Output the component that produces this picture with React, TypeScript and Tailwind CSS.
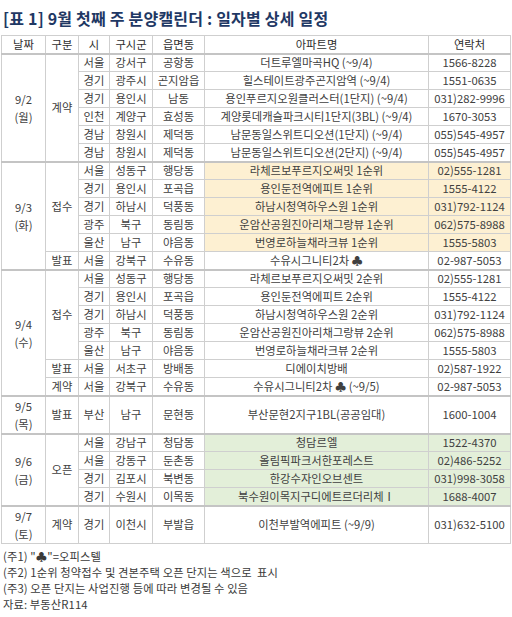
type Row = {
  si: string;
  gu: string;
  dong: string;
  apt: string;
  tel: string;
  hl?: 'y' | 'g';
};

type Kind = { kind: string; rows: Row[] };
type Day = { date: string; dow: string; tall?: string; kinds: Kind[] };

const days: Day[] = [
  {
    date: '9/2',
    dow: '(월)',
    kinds: [
      {
        kind: '계약',
        rows: [
          { si: '서울', gu: '강서구', dong: '공항동', apt: '더트루엘마곡HQ (~9/4)', tel: '1566-8228' },
          { si: '경기', gu: '광주시', dong: '곤지암읍', apt: '힐스테이트광주곤지암역 (~9/4)', tel: '1551-0635' },
          { si: '경기', gu: '용인시', dong: '남동', apt: '용인푸르지오원클러스터(1단지) (~9/4)', tel: '031)282-9996' },
          { si: '인천', gu: '계양구', dong: '효성동', apt: '계양롯데캐슬파크시티1단지(3BL) (~9/4)', tel: '1670-3053' },
          { si: '경남', gu: '창원시', dong: '제덕동', apt: '남문동일스위트디오션(1단지) (~9/4)', tel: '055)545-4957' },
          { si: '경남', gu: '창원시', dong: '제덕동', apt: '남문동일스위트디오션(2단지) (~9/4)', tel: '055)545-4957' },
        ],
      },
    ],
  },
  {
    date: '9/3',
    dow: '(화)',
    kinds: [
      {
        kind: '접수',
        rows: [
          { si: '서울', gu: '성동구', dong: '행당동', apt: '라체르보푸르지오써밋 1순위', tel: '02)555-1281', hl: 'y' },
          { si: '경기', gu: '용인시', dong: '포곡읍', apt: '용인둔전역에피트 1순위', tel: '1555-4122', hl: 'y' },
          { si: '경기', gu: '하남시', dong: '덕풍동', apt: '하남시청역하우스원 1순위', tel: '031)792-1124', hl: 'y' },
          { si: '광주', gu: '북구', dong: '동림동', apt: '운암산공원진아리채그랑뷰 1순위', tel: '062)575-8988', hl: 'y' },
          { si: '울산', gu: '남구', dong: '야음동', apt: '번영로하늘채라크뷰 1순위', tel: '1555-5803', hl: 'y' },
        ],
      },
      {
        kind: '발표',
        rows: [{ si: '서울', gu: '강북구', dong: '수유동', apt: '수유시그니티2차 ♣', tel: '02-987-5053' }],
      },
    ],
  },
  {
    date: '9/4',
    dow: '(수)',
    kinds: [
      {
        kind: '접수',
        rows: [
          { si: '서울', gu: '성동구', dong: '행당동', apt: '라체르보푸르지오써밋 2순위', tel: '02)555-1281' },
          { si: '경기', gu: '용인시', dong: '포곡읍', apt: '용인둔전역에피트 2순위', tel: '1555-4122' },
          { si: '경기', gu: '하남시', dong: '덕풍동', apt: '하남시청역하우스원 2순위', tel: '031)792-1124' },
          { si: '광주', gu: '북구', dong: '동림동', apt: '운암산공원진아리채그랑뷰 2순위', tel: '062)575-8988' },
          { si: '울산', gu: '남구', dong: '야음동', apt: '번영로하늘채라크뷰 2순위', tel: '1555-5803' },
        ],
      },
      {
        kind: '발표',
        rows: [{ si: '서울', gu: '서초구', dong: '방배동', apt: '디에이치방배', tel: '02)587-1922' }],
      },
      {
        kind: '계약',
        rows: [{ si: '서울', gu: '강북구', dong: '수유동', apt: '수유시그니티2차 ♣ (~9/5)', tel: '02-987-5053' }],
      },
    ],
  },
  {
    date: '9/5',
    dow: '(목)',
    tall: 'h-[37px]',
    kinds: [
      {
        kind: '발표',
        rows: [{ si: '부산', gu: '남구', dong: '문현동', apt: '부산문현2지구1BL(공공임대)', tel: '1600-1004' }],
      },
    ],
  },
  {
    date: '9/6',
    dow: '(금)',
    kinds: [
      {
        kind: '오픈',
        rows: [
          { si: '서울', gu: '강남구', dong: '청담동', apt: '청담르엘', tel: '1522-4370', hl: 'g' },
          { si: '서울', gu: '강동구', dong: '둔촌동', apt: '올림픽파크서한포레스트', tel: '02)486-5252', hl: 'g' },
          { si: '경기', gu: '김포시', dong: '북변동', apt: '한강수자인오브센트', tel: '031)998-3058', hl: 'g' },
          { si: '경기', gu: '수원시', dong: '이목동', apt: '북수원이목지구디에트르더리체Ⅰ', tel: '1688-4007', hl: 'g' },
        ],
      },
    ],
  },
  {
    date: '9/7',
    dow: '(토)',
    tall: 'h-[37px]',
    kinds: [
      {
        kind: '계약',
        rows: [{ si: '경기', gu: '이천시', dong: '부발읍', apt: '이천부발역에피트 (~9/9)', tel: '031)632-5100' }],
      },
    ],
  },
];

const cell = 'border border-[#cfcfcf] text-center align-middle px-0 py-0 whitespace-nowrap';

export default function App() {
  return (
    <div
      className="w-[512px] h-[617px] bg-white text-[#404040] overflow-hidden"
      style={{ fontFamily: '"Noto Sans CJK KR", "Noto Sans", sans-serif' }}
    >
      <h1 className="pl-[3px] pt-[8px] h-[35px] text-[16px] font-bold text-[#1f3864] leading-[20px] tracking-[0.2px]">
        [표 1] 9월 첫째 주 분양캘린더 : 일자별 상세 일정
      </h1>

      <table className="ml-px w-[509px] table-fixed border-collapse text-[11.3px] leading-none border border-[#b8b8b8]">
        <colgroup>
          <col className="w-[44px]" />
          <col className="w-[33px]" />
          <col className="w-[31px]" />
          <col className="w-[43px]" />
          <col className="w-[52px]" />
          <col className="w-[224px]" />
          <col className="w-[82px]" />
        </colgroup>
        <thead>
          <tr className="h-[18px] border-b-2 border-[#c4c4c4]">
            {['날짜', '구분', '시', '구시군', '읍면동', '아파트명', '연락처'].map((h) => (
              <th key={h} className={`${cell} font-normal text-[#2e2e2e]`}>
                {h}
              </th>
            ))}
          </tr>
        </thead>
        <tbody>
          {days.map((d) => {
            const total = d.kinds.reduce((n, k) => n + k.rows.length, 0);
            let first = true;
            return d.kinds.map((k) =>
              k.rows.map((r, ri) => {
                const isFirst = first;
                first = false;
                const hlBg = r.hl === 'y' ? 'bg-[#fdf0d2]' : r.hl === 'g' ? 'bg-[#e3efd9]' : '';
                return (
                  <tr
                    key={d.date + k.kind + ri}
                    className={`${d.tall ?? 'h-[18px]'} ${isFirst ? 'border-t-2 border-[#c4c4c4]' : ''}`}
                  >
                    {isFirst && (
                      <td rowSpan={total} className={`${cell} leading-[18px]`}>
                        <div>{d.date}</div>
                        <div>{d.dow}</div>
                      </td>
                    )}
                    {ri === 0 && (
                      <td rowSpan={k.rows.length} className={cell}>
                        {k.kind}
                      </td>
                    )}
                    <td className={cell}>{r.si}</td>
                    <td className={cell}>{r.gu}</td>
                    <td className={cell}>{r.dong}</td>
                    <td className={`${cell} ${hlBg}`}>{r.apt}</td>
                    <td className={`${cell} ${hlBg}`}>{r.tel}</td>
                  </tr>
                );
              })
            );
          })}
        </tbody>
      </table>

      <div className="pl-[3px] pt-[4px] text-[11.3px] leading-[16px] tracking-[0.1px] text-[#3a3a3a]">
        <p>(주1) "♣"=오피스텔</p>
        <p>(주2) 1순위 청약접수 및 견본주택 오픈 단지는 색으로&nbsp; 표시</p>
        <p>(주3) 오픈 단지는 사업진행 등에 따라 변경될 수 있음</p>
        <p>자료: 부동산R114</p>
      </div>
    </div>
  );
}
